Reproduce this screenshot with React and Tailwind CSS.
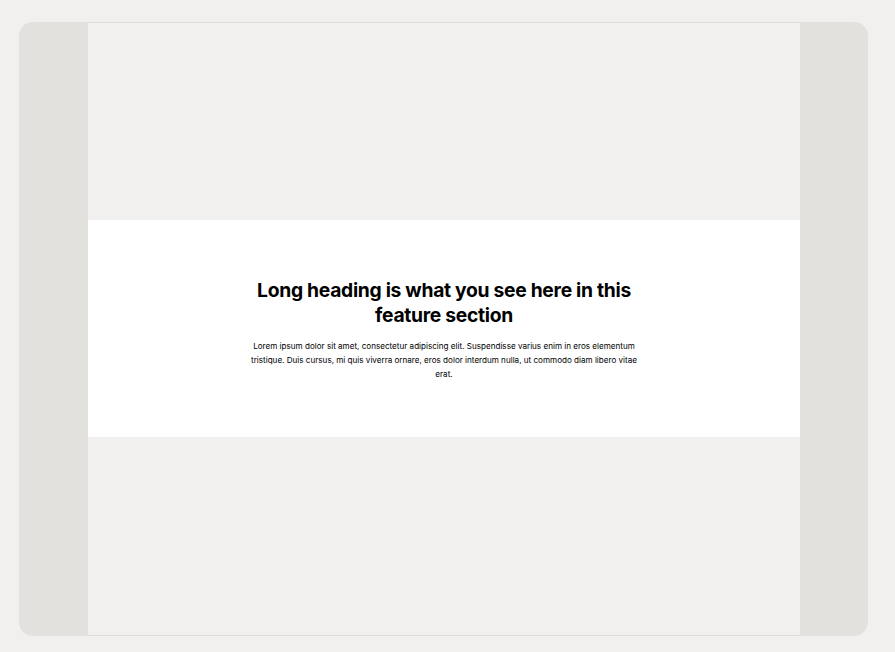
import React from 'react';

const App = () => {
  return (
    <div className="min-h-screen bg-[#f1f0ee] pt-[22px] pb-[16px] pl-[19px] pr-[27px]" style={{ fontFamily: 'Inter, "Liberation Sans", sans-serif' }}>
      {/* Preview frame */}
      <div className="flex h-[614px] overflow-hidden rounded-[14px] bg-[#e2e1dd] pl-[69px] pr-[68px]">
        <div className="flex flex-1 flex-col border-y border-[#dddcd8] bg-[#f1f0ee]">
          <div className="h-[197px]" />
          {/* Feature section */}
          <div className="flex h-[217px] flex-col items-center justify-center bg-white pt-[2px] text-center">
            <h2 className="max-w-[400px] text-[19.3px] font-bold leading-[25px] tracking-[-0.3px] text-black">
              Long heading is what you see here in this feature section
            </h2>
            <p className="mt-[11px] max-w-[390px] text-[8.1px] leading-[14px] text-black">
              Lorem ipsum dolor sit amet, consectetur adipiscing elit. Suspendisse varius enim in eros elementum tristique. Duis cursus, mi quis viverra ornare, eros dolor interdum nulla, ut commodo diam libero vitae erat.
            </p>
          </div>
          <div className="flex-1" />
        </div>
      </div>
    </div>
  );
};

export default App;
